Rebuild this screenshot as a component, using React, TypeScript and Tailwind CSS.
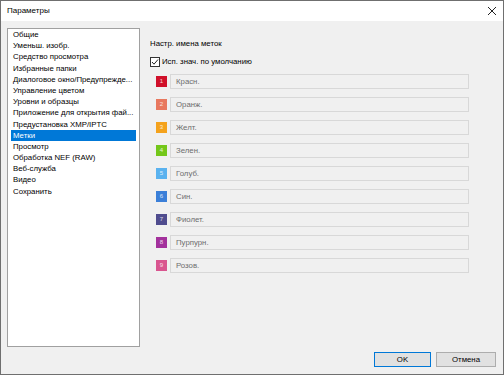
import React from "react";

const items = [
  "Общие",
  "Уменьш. изобр.",
  "Средство просмотра",
  "Избранные папки",
  "Диалоговое окно/Предупрежде...",
  "Управление цветом",
  "Уровни и образцы",
  "Приложение для открытия фай...",
  "Предустановка XMP/IPTC",
  "Метки",
  "Просмотр",
  "Обработка NEF (RAW)",
  "Веб-служба",
  "Видео",
  "Сохранить",
];

const labels: { n: number; c: string; t: string }[] = [
  { n: 1, c: "#d0102a", t: "Красн." },
  { n: 2, c: "#e8785e", t: "Оранж." },
  { n: 3, c: "#f4a21c", t: "Желт." },
  { n: 4, c: "#74c71a", t: "Зелен." },
  { n: 5, c: "#5ab2ef", t: "Голуб." },
  { n: 6, c: "#3b7fd8", t: "Син." },
  { n: 7, c: "#4f4c8e", t: "Фиолет." },
  { n: 8, c: "#a3319c", t: "Пурпурн." },
  { n: 9, c: "#d9558f", t: "Розов." },
];

export default function App() {
  return (
    <div className="w-[504px] h-[375px] flex flex-col border border-[#6f6f6f] bg-[#f0f0f0] font-['Liberation_Sans',sans-serif] text-[7.8px] text-black overflow-hidden">
      <div className="h-[20px] bg-white flex items-center justify-between pl-[6px] pr-[5px] text-[8px]">
        <span>Параметры</span>
        <svg width="10" height="10" viewBox="0 0 10 10" className="mr-[1px]">
          <path d="M1 1L9 9M9 1L1 9" stroke="#222" strokeWidth="1" />
        </svg>
      </div>
      <div className="flex-1 flex flex-col px-[6px] pt-[7px]">
        <div className="flex h-[319px]">
          <div className="w-[133px] h-full bg-white border border-[#a0a0a0] px-[3px]">
            {items.map((it, i) => (
              <div
                key={i}
                className={
                  "h-[11.2px] leading-[11.2px] pl-[2px] whitespace-nowrap overflow-hidden " +
                  (i === 9 ? "bg-[#0078d7] text-white" : "")
                }
              >
                {it}
              </div>
            ))}
          </div>
          <div className="flex-1 ml-[10px] flex flex-col">
            <div className="mt-[10px] h-[11px] leading-[11px]">Настр. имена меток</div>
            <div className="mt-[8px] flex items-center h-[10px]">
              <div className="w-[10px] h-[10px] border border-[#333] bg-white flex items-center justify-center">
                <svg width="8" height="8" viewBox="0 0 8 8">
                  <path d="M1 4L3 6.2L7 1.5" stroke="#222" strokeWidth="1" fill="none" />
                </svg>
              </div>
              <span className="ml-[2px]">Исп. знач. по умолчанию</span>
            </div>
            <div className="mt-[7px] flex flex-col gap-[8px]">
              {labels.map((l) => (
                <div key={l.n} className="flex items-center h-[15px]">
                  <div
                    className="ml-[6px] w-[11px] h-[11px] flex items-center justify-center text-[6px] text-white/80"
                    style={{ backgroundColor: l.c }}
                  >
                    {l.n}
                  </div>
                  <div className="ml-[3px] w-[299px] h-[15px] border border-[#d8d8d8] bg-[#f0f0f0] text-[#6d6d6d] flex items-center pl-[5px]">
                    {l.t}
                  </div>
                </div>
              ))}
            </div>
          </div>
        </div>
        <div className="mt-[5px] flex justify-end gap-[5px] pr-[1px]">
          <div className="w-[57px] h-[15px] border border-[#0078d7] bg-[#e1e1e1] flex items-center justify-center">
            OK
          </div>
          <div className="w-[60px] h-[15px] border border-[#adadad] bg-[#e1e1e1] flex items-center justify-center">
            Отмена
          </div>
        </div>
      </div>
    </div>
  );
}
